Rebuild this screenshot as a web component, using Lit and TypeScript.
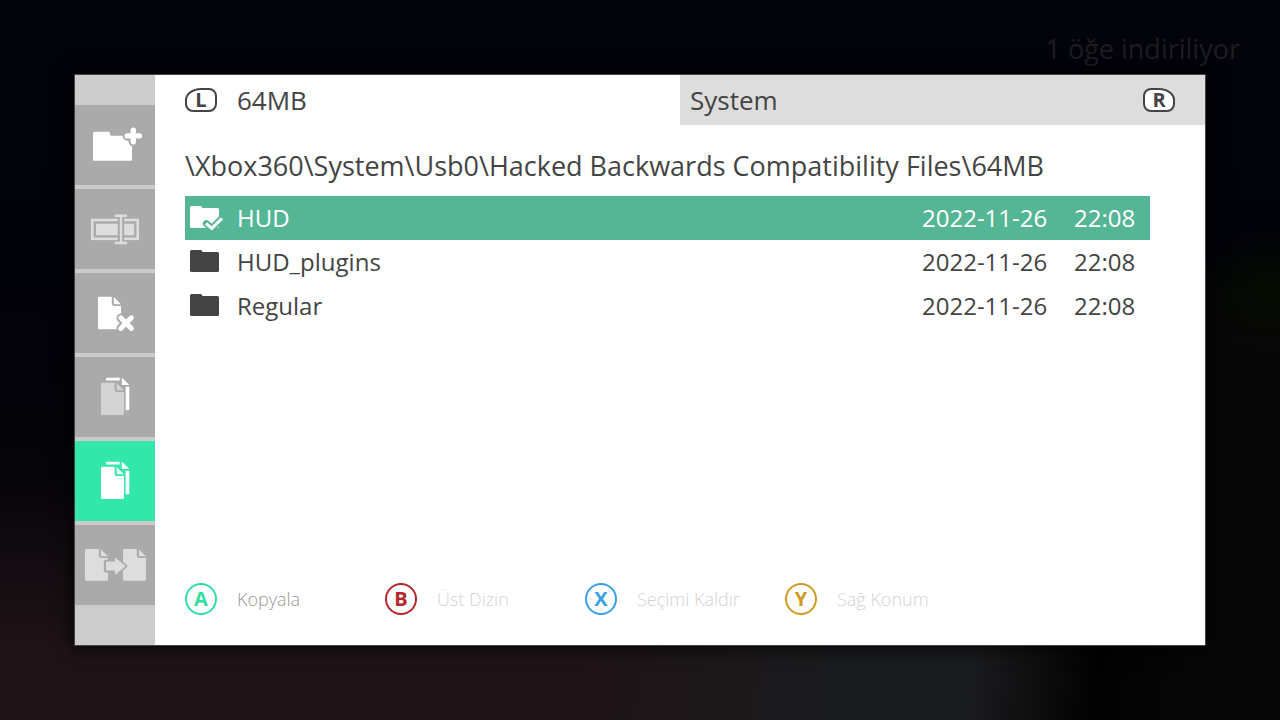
import { LitElement, html, css, svg, nothing } from "lit";
import { customElement, state } from "lit/decorators.js";
import { classMap } from "lit/directives/class-map.js";

interface Entry {
  name: string;
  date: string;
  time: string;
}

interface Tool {
  id: string;
  label: string;
  art: unknown;
}

interface Hint {
  key: string;
  label: string;
  tone: string;
  enabled: boolean;
}

const ENTRIES: Entry[] = [
  { name: "HUD", date: "2022-11-26", time: "22:08" },
  { name: "HUD_plugins", date: "2022-11-26", time: "22:08" },
  { name: "Regular", date: "2022-11-26", time: "22:08" },
];

const HINTS: Hint[] = [
  { key: "A", label: "Kopyala", tone: "green", enabled: true },
  { key: "B", label: "Üst Dizin", tone: "red", enabled: false },
  { key: "X", label: "Seçimi Kaldır", tone: "blue", enabled: false },
  { key: "Y", label: "Sağ Konum", tone: "gold", enabled: false },
];

const newFolder = svg`
  <path class="ink" d="M19.5 26.7H33.5Q35 26.7 35 28.2V29.2Q35 30.7 36.5 30.7H55.5Q57 30.7 57 32.2V54.2Q57 55.7 55.5 55.7H19.5Q18 55.7 18 54.2V28.2Q18 26.7 19.5 26.7Z"/>
  <path class="gap" d="M58.3 25.3V36.5M52.4 30.9H64.2" stroke-width="9.6"/>
  <path class="line" d="M58.3 25.1V36.7M52.2 30.9H64.4" stroke-width="5.4"/>`;

const rename = svg`
  <g class="soft">
    <rect class="frame" x="17.3" y="31" width="45.4" height="18.8" stroke-width="2.6"/>
    <rect class="ink" x="21" y="34.7" width="38.2" height="11.6"/>
    <path class="cut" d="M46 28V53" stroke-width="6.4"/>
    <path class="frame" d="M39.7 26.8H52M46 26.8V54M39.7 54H52" stroke-width="2.4"/>
  </g>`;

const remove = svg`
  <path class="ink" d="M24.2 23.7H36.8V30.6Q36.8 33 39.2 33H46V55Q46 56.2 44.8 56.2H24.2Q23 56.2 23 55V24.9Q23 23.7 24.2 23.7ZM38.8 23.9L45.9 31.2H40Q38.8 31.2 38.8 30Z"/>
  <path class="gap" d="M46 45L56.2 55.2M56.2 45L46 55.2" stroke-width="9"/>
  <path class="line" d="M45.8 44.8L56.4 55.4M56.4 44.8L45.8 55.4" stroke-width="5"/>`;

const pages = (front: string) => svg`
  <path class="ink" d="M32 20.8H44.7V23.4H31V21.8Q31 20.8 32 20.8ZM46.8 20.6L54.3 28H46.8ZM50.6 29.8H54.3V52Q54.3 53.2 53.1 53.2H50.6Z"/>
  <path class="${front}" d="M27.2 25.7H39.6V32.8Q39.6 35 41.8 35H49V56.8Q49 58 47.8 58H27.2Q26 58 26 56.8V26.9Q26 25.7 27.2 25.7ZM41.6 25.9L48.9 33.2H42.8Q41.6 33.2 41.6 32Z"/>`;

const move = svg`
  <g class="soft">
    <path class="ink" d="M11.2 24H23.8V30.6Q23.8 33 26.2 33H33V54.5Q33 55.7 31.8 55.7H11.2Q10 55.7 10 54.5V25.2Q10 24 11.2 24ZM25.8 24.2L32.9 31.2H27Q25.8 31.2 25.8 30Z"/>
    <path class="ink" d="M49.2 24H61.8V30.6Q61.8 33 64.2 33H71V54.5Q71 55.7 69.8 55.7H49.2Q48 55.7 48 54.5V25.2Q48 24 49.2 24ZM63.8 24.2L70.9 31.2H65Q63.8 31.2 63.8 30Z"/>
    <path class="halo" d="M31 37H40.4V33.4L50 41.1L40.4 48.8V45.2H31Z" stroke-width="4.4"/>
    <path class="ink" d="M32 36.6H40V33.2Q40 32.6 40.6 32.9L50 40.4Q50.6 41.1 50 41.8L40.6 49.3Q40 49.6 40 49V45.6H32Q31 45.6 31 44.6V37.6Q31 36.6 32 36.6Z"/>
  </g>`;

const TOOLS: Tool[] = [
  { id: "new", label: "Yeni klasör", art: newFolder },
  { id: "rename", label: "Yeniden adlandır", art: rename },
  { id: "delete", label: "Sil", art: remove },
  { id: "copy-one", label: "Dosyayı kopyala", art: pages("pale") },
  { id: "copy", label: "Kopyala", art: pages("ink") },
  { id: "move", label: "Taşı", art: move },
];

@customElement("tool-rail")
export class ToolRail extends LitElement {
  @state() private active = "copy";

  static styles = css`
    :host {
      display: block;
      background: #cccccc;
    }
    .rail {
      display: flex;
      flex-direction: column;
      gap: 4px;
      padding: 30px 0 40px;
    }
    .tool {
      --face: #aaaaaa;
      display: block;
      width: 100%;
      height: 80px;
      padding: 0;
      border: 0;
      background: var(--face);
      cursor: pointer;
    }
    .tool.active {
      --face: #33e6aa;
    }
    svg {
      display: block;
      width: 80px;
      height: 80px;
    }
    .ink {
      fill: #ffffff;
    }
    .pale {
      fill: #d4d4d4;
    }
    .soft .ink {
      fill: #dddddd;
    }
    .line,
    .gap,
    .frame,
    .cut,
    .halo {
      fill: none;
      stroke: #ffffff;
    }
    .line,
    .gap {
      stroke-linecap: round;
    }
    .frame {
      stroke: #dddddd;
    }
    .gap,
    .cut,
    .halo {
      stroke: var(--face);
    }
    .halo {
      stroke-linejoin: round;
    }
  `;

  render() {
    return html`<nav class="rail">
      ${TOOLS.map(
        (t) => html`<button
          type="button"
          class=${classMap({ tool: true, active: t.id === this.active })}
          aria-label=${t.label}
          @click=${() => (this.active = t.id)}
        >
          <svg viewBox="0 0 80 80" aria-hidden="true">${t.art}</svg>
        </button>`
      )}
    </nav>`;
  }
}

@customElement("app-root")
export class AppRoot extends LitElement {
  @state() private selected = 0;

  static styles = css`
    :host {
      display: block;
      font-family: "Open Sans", "Noto Sans", sans-serif;
      color: #444444;
    }
    .screen {
      box-sizing: border-box;
      display: grid;
      grid-template-rows: 75px 1fr;
      min-height: 100vh;
      padding: 0 75px 75px;
      background:
        radial-gradient(ellipse 110px 60px at 100% 40%, #060b00, transparent) no-repeat,
        linear-gradient(transparent 36%, #070707 46%) right / 76px 100% no-repeat,
        linear-gradient(#02030b 0%, #02020a 40%, rgba(3, 3, 8, 0.9) 66%, transparent 90%),
        linear-gradient(96deg, #1f1317 0%, #1f1317 48%, #1a1b1d 66%, #1a1b1d 77%, #020202 86%, #070707 94%);
    }
    .status {
      margin: 0 -35px 0 0;
      padding-top: 31px;
      text-align: right;
      font-size: 27px;
      line-height: 36px;
      color: #1d1d20;
    }
    .panel {
      display: grid;
      grid-template-columns: 80px 1fr;
      background: #ffffff;
      box-shadow:
        0 0 0 1px #444444,
        0 0 16px 4px rgba(0, 0, 0, 0.7);
    }
    .main {
      display: flex;
      flex-direction: column;
    }
    .tabs {
      display: grid;
      grid-template-columns: 1fr 1fr;
      height: 50px;
    }
    .tab {
      display: flex;
      align-items: center;
      gap: 20px;
      padding: 0 30px;
      border: 0;
      background: #ffffff;
      font: inherit;
      font-size: 26px;
      line-height: 36px;
      color: inherit;
      text-align: left;
      cursor: pointer;
    }
    .tab.other {
      justify-content: space-between;
      padding-left: 10px;
      background: #dddddd;
    }
    .bumper {
      box-sizing: border-box;
      width: 32px;
      height: 24px;
      border: 2px solid #444444;
      background: #ffffff;
      font-size: 20px;
      font-weight: 700;
      line-height: 20px;
      text-align: center;
    }
    .bumper.left {
      border-radius: 16px 8px 8px 8px / 12px 8px 8px 8px;
    }
    .bumper.right {
      border-radius: 8px 16px 8px 8px / 8px 12px 8px 8px;
    }
    .path {
      margin: 0;
      padding: 23px 30px 12px;
      font-size: 27px;
      font-weight: 400;
      line-height: 36px;
    }
    .files {
      margin: 0 55px 0 30px;
      border-collapse: collapse;
      font-size: 24px;
      line-height: 44px;
    }
    .row {
      cursor: pointer;
    }
    .row.on {
      background: #55b696;
      color: #ffffff;
    }
    .files td {
      height: 44px;
      padding: 0;
      text-align: left;
    }
    .files .mark {
      width: 52px;
    }
    .files .date {
      width: 152px;
    }
    .files .time {
      width: 76px;
    }
    .mark svg {
      display: block;
      width: 52px;
      height: 44px;
    }
    .folder {
      fill: currentColor;
    }
    .tick,
    .tick-gap {
      fill: none;
      stroke: currentColor;
    }
    .tick-gap {
      stroke: #55b696;
      stroke-linejoin: round;
      stroke-linecap: round;
    }
    .hints {
      display: flex;
      margin-top: auto;
      padding: 0 30px 30px;
    }
    .hint {
      display: flex;
      align-items: center;
      gap: 20px;
      width: 200px;
      padding: 0;
      border: 0;
      background: none;
      font: inherit;
      font-size: 18px;
      font-weight: 300;
      color: #999999;
      cursor: pointer;
    }
    .hint:disabled {
      color: #d4d4d4;
      cursor: default;
    }
    .key {
      box-sizing: border-box;
      width: 32px;
      height: 32px;
      border: 2px solid;
      border-radius: 50%;
      font-size: 20px;
      font-weight: 700;
      line-height: 28px;
      text-align: center;
    }
    .green {
      color: #33dda2;
    }
    .red {
      color: #b5272b;
    }
    .blue {
      color: #3aa0e4;
    }
    .gold {
      color: #cf9a26;
    }
  `;

  private renderRow(entry: Entry, index: number) {
    const on = index === this.selected;
    return html`<tr
      class=${classMap({ row: true, on })}
      @click=${() => (this.selected = index)}
    >
      <td class="mark">
        <svg viewBox="0 0 52 44" aria-hidden="true">
          <path
            class="folder"
            d="M6.5 10H15.5Q16.6 10 17 11L17.3 12H32.5Q34 12 34 13.5V30.5Q34 32 32.5 32H6.5Q5 32 5 30.5V11.5Q5 10 6.5 10Z"
          />
          ${on
            ? svg`<path class="tick-gap" d="M21.4 27.6L27 32.4L36.6 22.6" stroke-width="7"/>
                <path class="tick" d="M21 27.6L26.8 32.4L37 22.4" stroke-width="3.2"/>`
            : nothing}
        </svg>
      </td>
      <td>${entry.name}</td>
      <td class="date">${entry.date}</td>
      <td class="time">${entry.time}</td>
    </tr>`;
  }

  render() {
    return html`<div class="screen">
      <p class="status">1 öğe indiriliyor</p>
      <div class="panel">
        <tool-rail></tool-rail>
        <main class="main">
          <div class="tabs">
            <button type="button" class="tab">
              <span class="bumper left">L</span><span>64MB</span>
            </button>
            <button type="button" class="tab other">
              <span>System</span><span class="bumper right">R</span>
            </button>
          </div>
          <h1 class="path">\\Xbox360\\System\\Usb0\\Hacked Backwards Compatibility Files\\64MB</h1>
          <table class="files">
            <tbody>
              ${ENTRIES.map((e, i) => this.renderRow(e, i))}
            </tbody>
          </table>
          <div class="hints">
            ${HINTS.map(
              (h) => html`<button type="button" class="hint" ?disabled=${!h.enabled}>
                <span class="key ${h.tone}">${h.key}</span><span>${h.label}</span>
              </button>`
            )}
          </div>
        </main>
      </div>
    </div>`;
  }
}
